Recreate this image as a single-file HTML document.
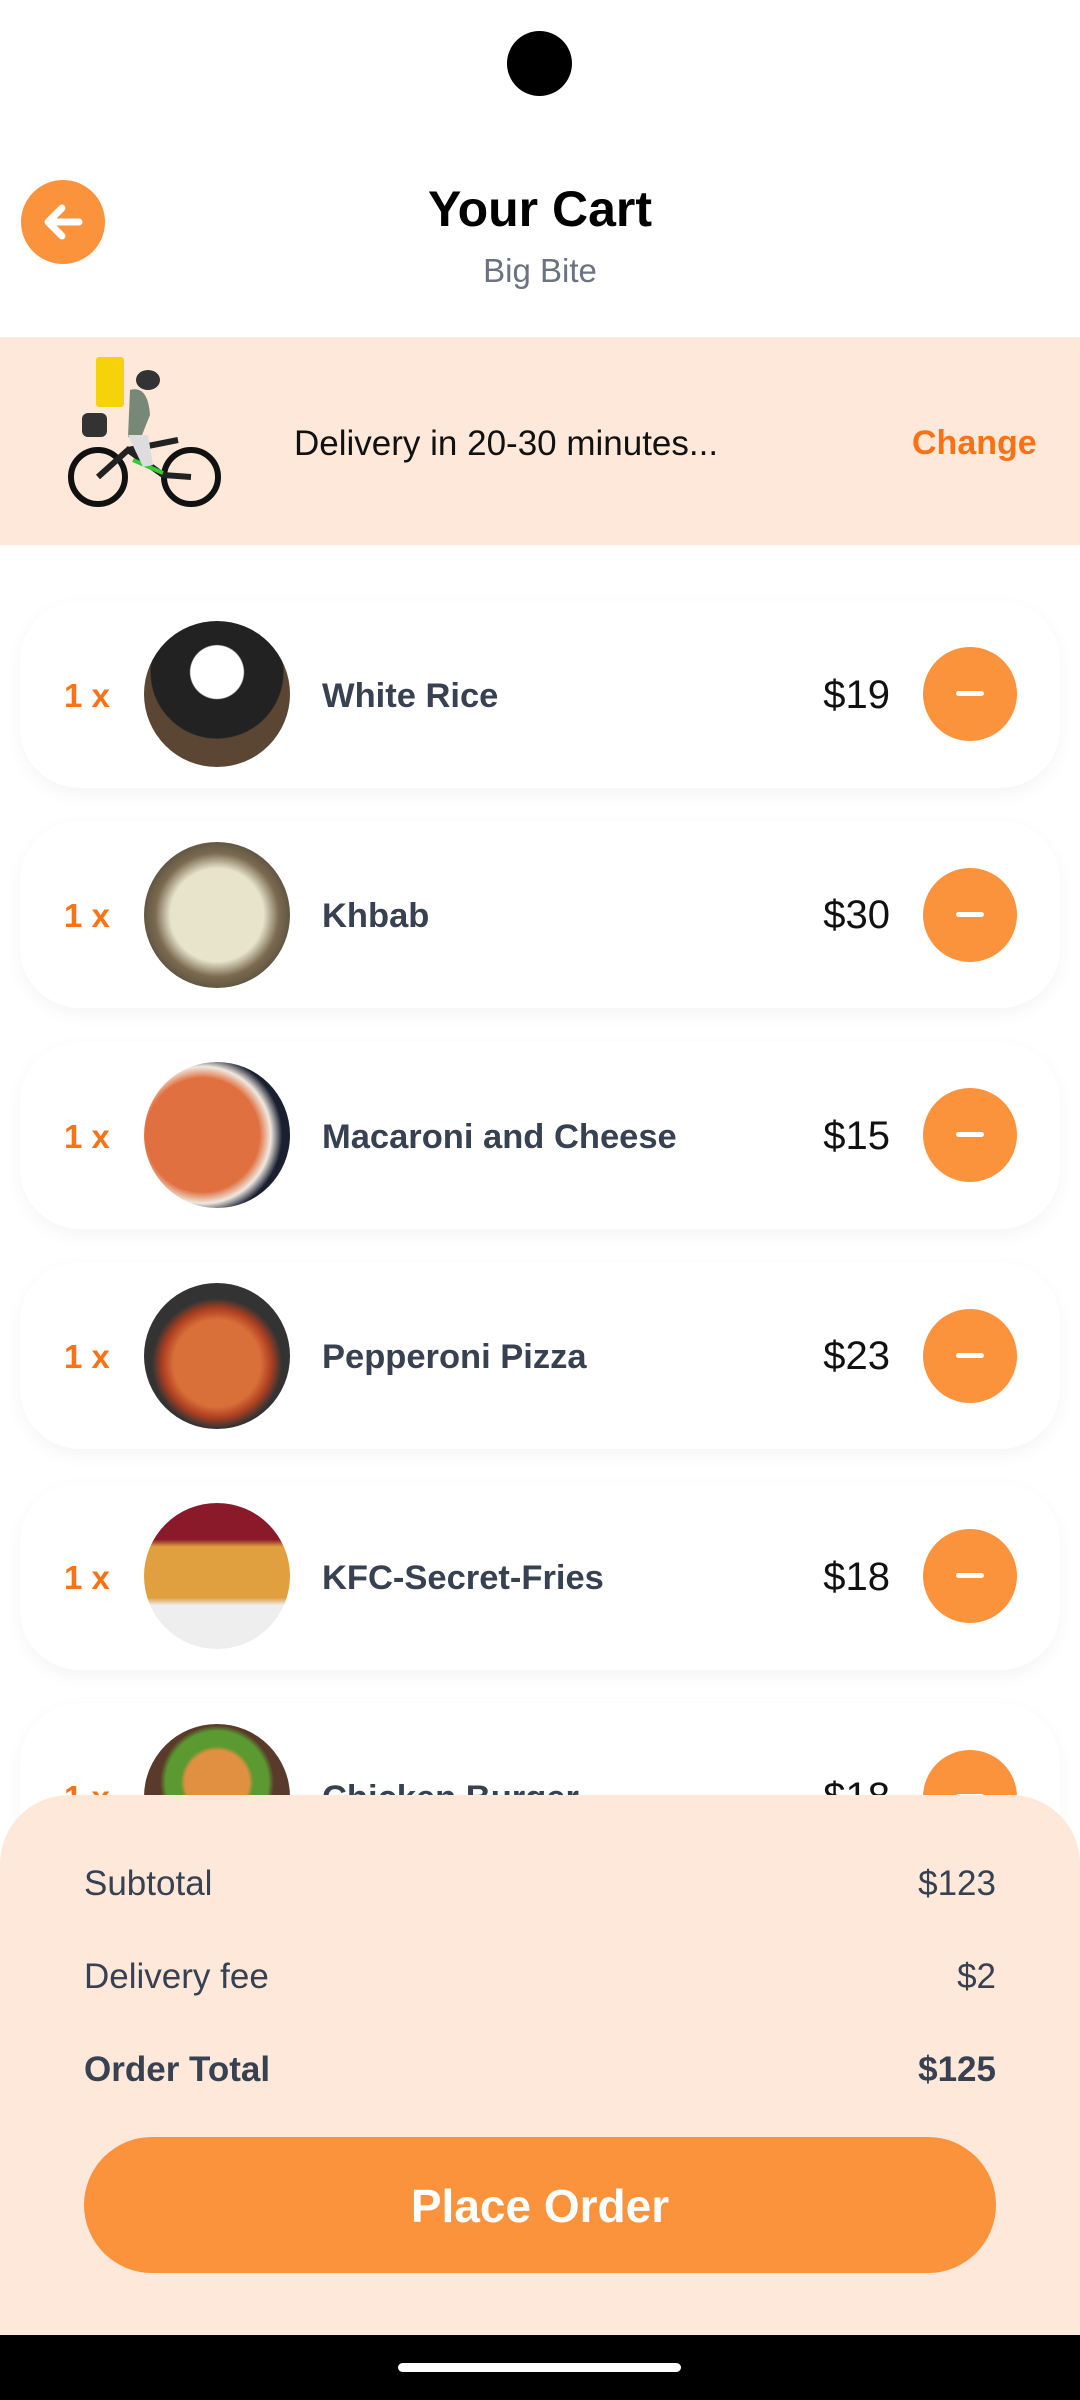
<!DOCTYPE html>
<html><head><meta charset="utf-8"><style>
*{margin:0;padding:0;box-sizing:border-box}
body{width:1080px;height:2400px;position:relative;overflow:hidden;background:#fff;font-family:"Liberation Sans",sans-serif}
.abs{position:absolute}
.card{position:absolute;left:20px;width:1040px;height:187px;border-radius:60px;background:#fff;box-shadow:0 6px 18px rgba(0,0,0,0.045)}
.qty{position:absolute;left:64px;color:#f97316;font-weight:bold;font-size:33px;line-height:40px}
.img{position:absolute;left:144px;width:146px;height:146px;border-radius:50%}
.name{position:absolute;left:322px;color:#374151;font-weight:bold;font-size:34.5px;line-height:40px}
.price{position:absolute;right:190px;color:#111;font-size:40px;line-height:44px;font-weight:500}
.minus{position:absolute;left:923px;width:94px;height:94px;border-radius:50%;background:#fb923c}
.minus::after{content:"";position:absolute;left:33px;top:44px;width:28px;height:5px;border-radius:3px;background:#fff}
.row{position:absolute;left:84px;right:84px;font-size:35px;color:#374151;display:flex;justify-content:space-between}
</style></head><body>
<div class="abs" style="left:507px;top:31px;width:65px;height:65px;border-radius:50%;background:#000"></div>
<div class="abs" style="left:21px;top:180px;width:84px;height:84px;border-radius:50%;background:#fb923c">
<svg width="84" height="84" viewBox="0 0 84 84"><path d="M58 42H28M41 28L27 42L41 56" stroke="#fff" stroke-width="7" fill="none" stroke-linecap="round" stroke-linejoin="round"/></svg></div>
<div class="abs" style="left:0;width:1080px;top:180px;text-align:center;font-size:50px;font-weight:bold;color:#000">Your Cart</div>
<div class="abs" style="left:0;width:1080px;top:252px;text-align:center;font-size:33px;color:#6b7280">Big Bite</div>
<div class="abs" style="left:0;top:337px;width:1080px;height:208px;background:#fde8da"></div>
<svg class="abs" style="left:68px;top:355px" width="160" height="160" viewBox="0 0 160 160">
<circle cx="30" cy="122" r="27" fill="none" stroke="#111" stroke-width="6"/><circle cx="123" cy="122" r="27" fill="none" stroke="#111" stroke-width="6"/>
<path d="M30 122L60 95L95 120L123 122M60 95L110 85" stroke="#222" stroke-width="6" fill="none"/>
<path d="M65 105L95 118" stroke="#3c3" stroke-width="4"/>
<rect x="28" y="2" width="28" height="50" rx="3" fill="#f5d20a"/>
<ellipse cx="80" cy="25" rx="12" ry="10" fill="#333"/>
<path d="M62 35Q80 30 82 60L72 85L60 82Z" fill="#778877"/><path d="M60 80L80 80L85 110L75 112Z" fill="#ddd"/>
<rect x="14" y="58" width="25" height="24" rx="6" fill="#333"/>
</svg>
<div class="abs" style="left:294px;top:424px;font-size:35px;color:#111">Delivery in 20-30 minutes...</div>
<div class="abs" style="left:912px;top:424px;font-size:34px;color:#f97316;font-weight:bold">Change</div>

<div class="card" style="top:601px"></div>
<div class="qty" style="top:676px">1 x</div><div class="img" style="top:621px;background:radial-gradient(circle at 50% 35%,#fff 0 22%,#222 23% 55%,#5a4633 56%)"></div>
<div class="name" style="top:676px">White Rice</div><div class="price" style="top:673px">$19</div><div class="minus" style="top:647px"></div>

<div class="card" style="top:821px"></div>
<div class="qty" style="top:896px">1 x</div><div class="img" style="top:842px;background:radial-gradient(circle at 50% 50%,#e8e4cc 0 45%,#7a6a50 60%,#222)"></div>
<div class="name" style="top:896px">Khbab</div><div class="price" style="top:893px">$30</div><div class="minus" style="top:868px"></div>

<div class="card" style="top:1042px"></div>
<div class="qty" style="top:1117px">1 x</div><div class="img" style="top:1062px;background:radial-gradient(circle at 40% 50%,#e07040 0 50%,#f0e8e0 60%,#1a2030 70%)"></div>
<div class="name" style="top:1117px">Macaroni and Cheese</div><div class="price" style="top:1114px">$15</div><div class="minus" style="top:1088px"></div>

<div class="card" style="top:1262px"></div>
<div class="qty" style="top:1337px">1 x</div><div class="img" style="top:1283px;background:radial-gradient(circle at 50% 55%,#d9703a 0 40%,#b04020 50%,#333 60%)"></div>
<div class="name" style="top:1337px">Pepperoni Pizza</div><div class="price" style="top:1334px">$23</div><div class="minus" style="top:1309px"></div>

<div class="card" style="top:1483px"></div>
<div class="qty" style="top:1558px">1 x</div><div class="img" style="top:1503px;background:linear-gradient(#8a1a2a 0 25%,#e0a040 30% 65%,#eee 70%)"></div>
<div class="name" style="top:1558px">KFC-Secret-Fries</div><div class="price" style="top:1555px">$18</div><div class="minus" style="top:1529px"></div>

<div class="card" style="top:1703px"></div>
<div class="qty" style="top:1778px">1 x</div><div class="img" style="top:1724px;background:radial-gradient(circle at 50% 40%,#e09040 0 28%,#5a9a30 32% 45%,#5a3a2a 50%)"></div>
<div class="name" style="top:1778px">Chicken Burger</div><div class="price" style="top:1775px">$18</div><div class="minus" style="top:1750px"></div>

<div class="abs" style="left:0;top:1795px;width:1080px;height:560px;background:#fde8da;border-radius:69px 69px 0 0"></div>
<div class="row" style="top:1864px"><span>Subtotal</span><span>$123</span></div>
<div class="row" style="top:1957px"><span>Delivery fee</span><span>$2</span></div>
<div class="row" style="top:2050px;font-weight:bold"><span>Order Total</span><span>$125</span></div>
<div class="abs" style="left:84px;top:2137px;width:912px;height:136px;border-radius:68px;background:#fb923c;color:#fff;font-weight:bold;font-size:46px;text-align:center;line-height:138px">Place Order</div>
<div class="abs" style="left:0;top:2335px;width:1080px;height:65px;background:#000"></div>
<div class="abs" style="left:398px;top:2363px;width:283px;height:9px;border-radius:5px;background:#fff"></div>
</body></html>
